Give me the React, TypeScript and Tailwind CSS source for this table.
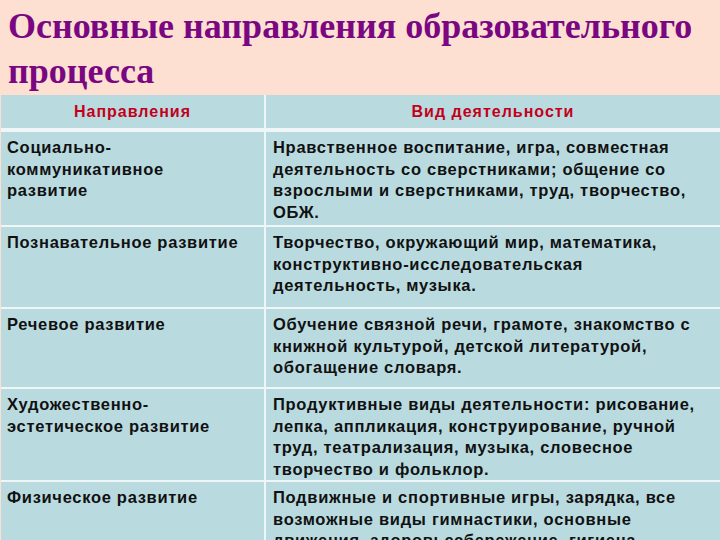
import React from 'react';

const rows: { left: string; right: string; h: string }[] = [
  {
    left: 'Социально-\nкоммуникативное\nразвитие',
    right:
      'Нравственное воспитание, игра, совместная\nдеятельность со сверстниками; общение со\nвзрослыми и сверстниками, труд, творчество,\nОБЖ.',
    h: 'h-[93px]',
  },
  {
    left: 'Познавательное развитие',
    right: 'Творчество, окружающий мир,  математика,\nконструктивно-исследовательская\nдеятельность, музыка.',
    h: 'h-[80px]',
  },
  {
    left: 'Речевое развитие',
    right: 'Обучение связной речи, грамоте, знакомство с\nкнижной культурой, детской литературой,\nобогащение словаря.',
    h: 'h-[78px]',
  },
  {
    left: 'Художественно-\nэстетическое развитие',
    right:
      'Продуктивные виды деятельности: рисование,\nлепка, аппликация, конструирование, ручной\nтруд, театрализация, музыка, словесное\nтворчество и фольклор.',
    h: 'h-[91px]',
  },
  {
    left: 'Физическое развитие',
    right:
      'Подвижные и спортивные игры, зарядка, все\nвозможные виды гимнастики, основные\nдвижения, здоровьесбережение, гигиена.',
    h: 'h-[90px]',
  },
];

export default function App() {
  return (
    <div className="w-[720px] h-[540px] overflow-hidden bg-[#fde0d2]">
      {/* Title */}
      <div className="h-[95px] pl-[8px] pt-[4px]">
        <h1 className="font-['Liberation_Serif',serif] font-bold text-[36px] leading-[45px] text-[#7a0781]">
          Основные направления образовательного процесса
        </h1>
      </div>

      {/* Table */}
      <div className="ml-[1px] bg-[#eef6f7] flex flex-col gap-[2px] font-['Liberation_Sans',Arial,sans-serif] font-bold">
        <div className="grid grid-cols-[263px_1fr] gap-[2px] mb-[2px]">
          <div className="bg-[#b9dbe0] h-[33px] flex items-center justify-center text-[16px] tracking-[1px] text-[#c3001c]">
            Направления
          </div>
          <div className="bg-[#b9dbe0] h-[33px] flex items-center justify-center text-[16px] tracking-[1px] text-[#c3001c]">
            Вид деятельности
          </div>
        </div>
        {rows.map((r, i) => (
          <div key={i} className="grid grid-cols-[263px_1fr] gap-[2px]">
            <div
              className={`bg-[#b9dbe0] ${r.h} pl-[6px] pt-[5px] text-[16.5px] leading-[21.5px] text-[#111] whitespace-pre-line tracking-[0.7px]`}
            >
              {r.left}
            </div>
            <div
              className={`bg-[#b9dbe0] ${r.h} pl-[7px] pt-[5px] text-[16.5px] leading-[21.5px] text-[#111] whitespace-pre-line tracking-[0.7px]`}
            >
              {r.right}
            </div>
          </div>
        ))}
      </div>
    </div>
  );
}
